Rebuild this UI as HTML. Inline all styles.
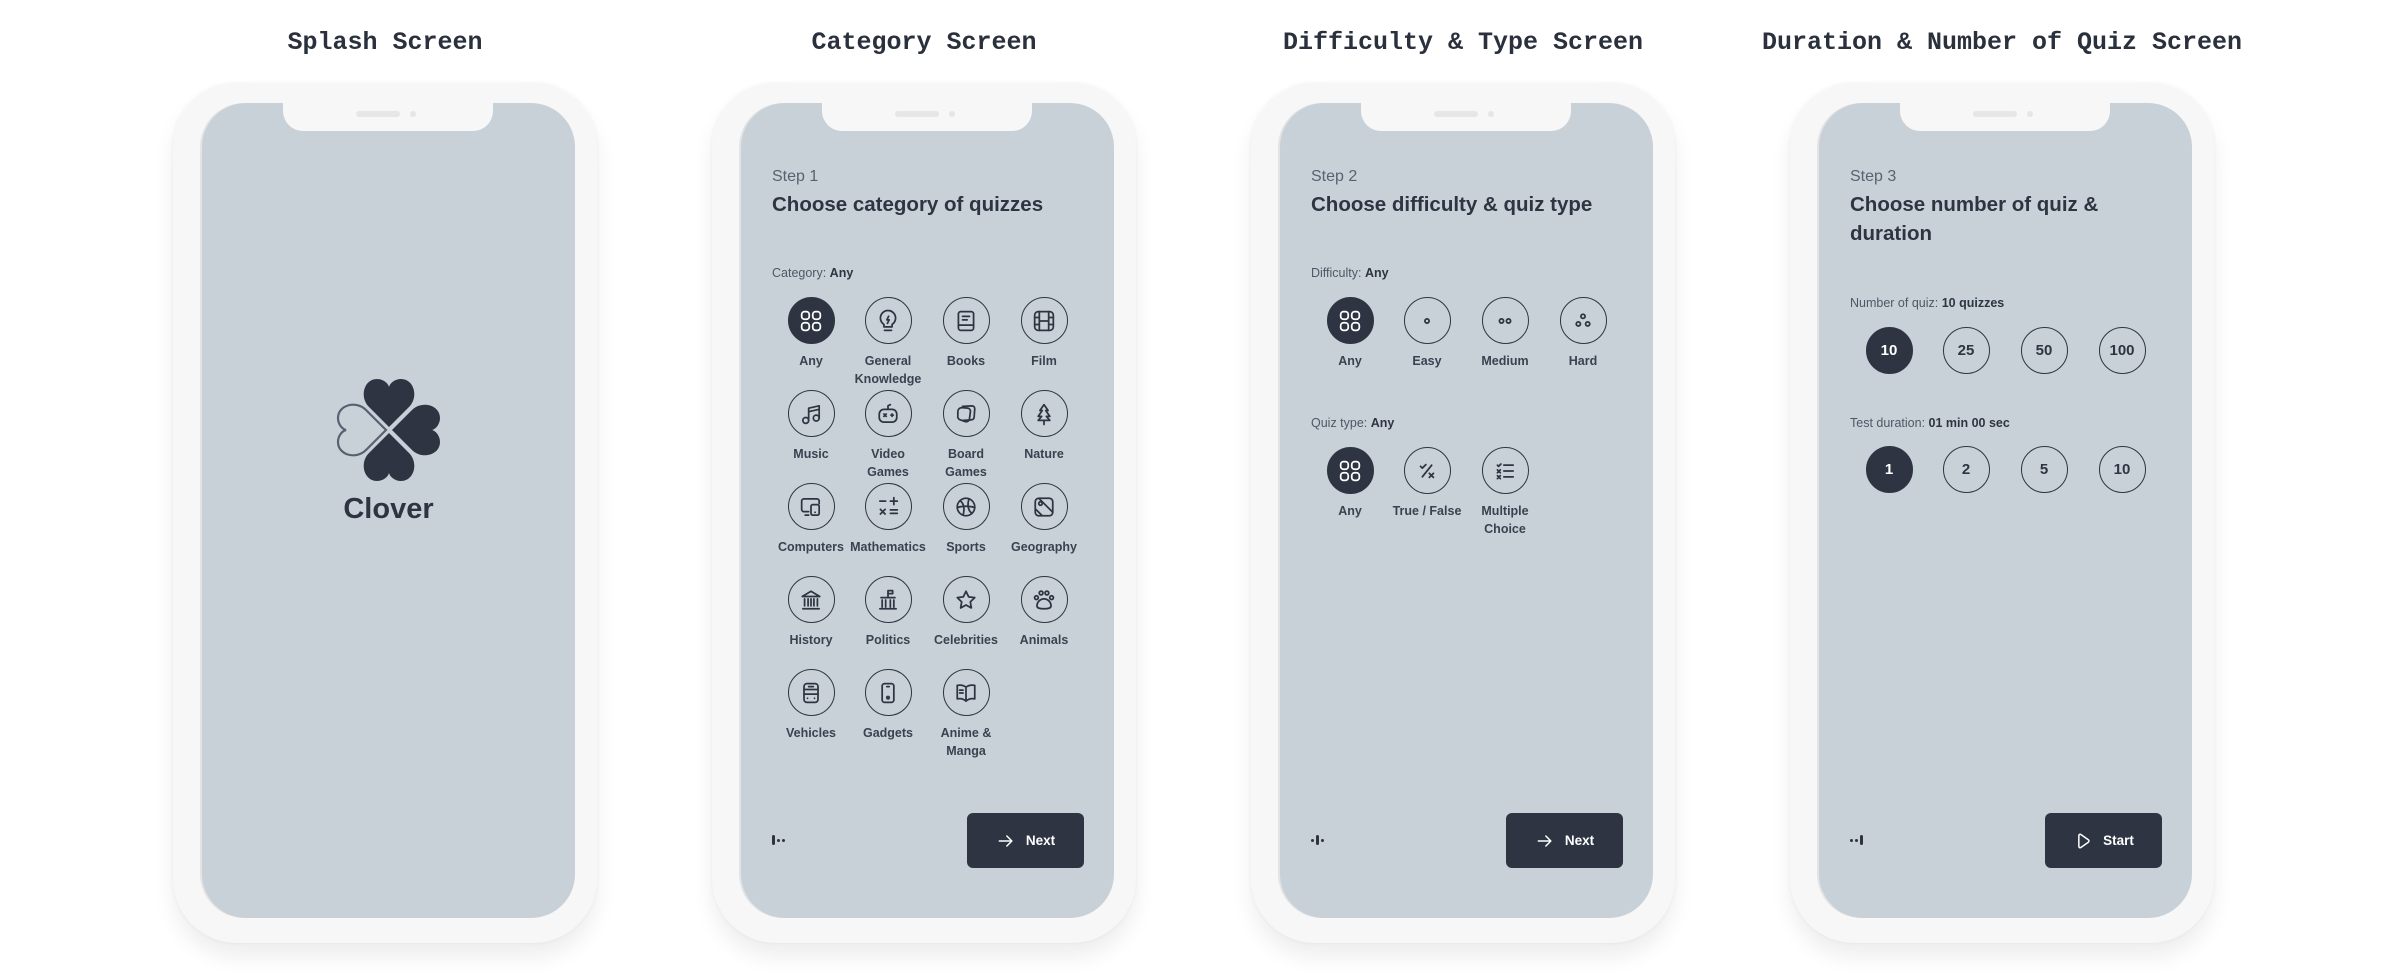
<!DOCTYPE html>
<html><head><meta charset="utf-8"><style>
*{margin:0;padding:0;box-sizing:border-box}
body{width:2388px;height:979px;background:#fff;position:relative;overflow:hidden;font-family:"Liberation Sans",sans-serif;color:#2e3442}
.t{position:absolute;top:28px;width:540px;text-align:center;font-family:"Liberation Mono",monospace;font-weight:bold;font-size:25px;color:#2a303c}
.ph{position:absolute;top:83px;width:424px;height:860px;background:#f7f7f7;border-radius:64px;box-shadow:0 14px 22px rgba(0,0,0,.07),0 0 4px rgba(0,0,0,.05)}
.sc{position:absolute;left:29px;top:20px;width:373px;height:815px;background:#c9d1d8;border-radius:44px;overflow:hidden;box-shadow:-2px 0 0 #e4e4e4}
.notch{position:absolute;left:81px;top:-2px;width:210px;height:30px;background:#f7f7f7;border-radius:0 0 20px 20px}
.spk{position:absolute;left:73px;top:10px;width:44px;height:6px;border-radius:3px;background:#e6e6e6}
.cam{position:absolute;left:127px;top:10px;width:6px;height:6px;border-radius:3px;background:#e6e6e6}
.step{position:absolute;left:31px;top:65px;font-size:16px;color:#596171}
.h{position:absolute;left:31px;top:87px;font-size:20.5px;font-weight:bold;color:#2e3442;line-height:29px;width:320px}
.lbl{position:absolute;left:31px;font-size:12.5px;color:#4f5766}
.lbl b{color:#2e3442}
.it{position:absolute;width:80px;margin-left:-40px;text-align:center}
.c{width:47px;height:47px;border:1.6px solid #2e3442;border-radius:50%;margin:0 auto;display:flex;align-items:center;justify-content:center;font-size:15px;font-weight:bold;color:#2e3442}
.c.on{background:#2e3442;color:#fff}
.c svg{width:28px;height:28px;fill:none;stroke:#2e3442;stroke-width:1.5;stroke-linecap:round;stroke-linejoin:round}
.c.on svg{stroke:#fff}
.it span{display:block;margin-top:8px;font-size:12.5px;font-weight:bold;line-height:18px;color:#3a4150;white-space:normal}
.it.w{width:96px;margin-left:-48px}
.btn{position:absolute;left:226px;top:710px;width:117px;height:55px;background:#2e3442;border-radius:6px;color:#fff;font-size:13.5px;font-weight:bold;display:flex;align-items:center;justify-content:center;gap:10px}
.btn svg{width:20px;height:20px;fill:none;stroke:#fff;stroke-width:1.8;stroke-linecap:round;stroke-linejoin:round}
.pg{position:absolute;left:31px;top:732px;display:flex;align-items:center;gap:2px}
.pg i{display:block;width:3px;height:3px;border-radius:2px;background:#2e3442}
.pg i.b{height:10px;width:3px}
</style></head><body>
<svg width="0" height="0" style="position:absolute"><defs>
<symbol id="any" viewBox="0 0 24 24"><rect x="4" y="4" width="6.5" height="6.5" rx="2.5"/><rect x="13.5" y="4" width="6.5" height="6.5" rx="2.5"/><rect x="4" y="13.5" width="6.5" height="6.5" rx="2.5"/><rect x="13.5" y="13.5" width="6.5" height="6.5" rx="2.5"/></symbol>
</defs></svg>

<div class="t" style="left:115px">Splash Screen</div>
<div class="t" style="left:654px">Category Screen</div>
<div class="t" style="left:1193px">Difficulty &amp; Type Screen</div>
<div class="t" style="left:1732px">Duration &amp; Number of Quiz Screen</div>

<!-- Phone 1 -->
<div class="ph" style="left:173px"><div class="sc"><div class="notch"><div class="spk"></div><div class="cam"></div></div>
<svg style="position:absolute;left:127px;top:267px" width="120" height="120" viewBox="-60 -60 120 120">
<path transform="translate(0,-3)" d="M0,0 L-20,-20 C-30,-30 -25,-48 -12,-48 C-6,-48 -1,-44 0,-40 C1,-44 6,-48 12,-48 C25,-48 30,-30 20,-20 Z" fill="#2e3442"/>
<path transform="rotate(90) translate(0,-3)" d="M0,0 L-20,-20 C-30,-30 -25,-48 -12,-48 C-6,-48 -1,-44 0,-40 C1,-44 6,-48 12,-48 C25,-48 30,-30 20,-20 Z" fill="#2e3442"/>
<path transform="rotate(180) translate(0,-3)" d="M0,0 L-20,-20 C-30,-30 -25,-48 -12,-48 C-6,-48 -1,-44 0,-40 C1,-44 6,-48 12,-48 C25,-48 30,-30 20,-20 Z" fill="#2e3442"/>
<path transform="rotate(270) translate(0,-3)" d="M0,0 L-20,-20 C-30,-30 -25,-48 -12,-48 C-6,-48 -1,-44 0,-40 C1,-44 6,-48 12,-48 C25,-48 30,-30 20,-20 Z" fill="none" stroke="#596171" stroke-width="2.2"/>
</svg>
<div style="position:absolute;left:0;width:373px;top:390px;text-align:center;font-size:29px;font-weight:bold;color:#2e3442">Clover</div>
</div></div>

<!-- Phone 2 -->
<div class="ph" style="left:712px"><div class="sc"><div class="notch"><div class="spk"></div><div class="cam"></div></div>
<div class="step">Step 1</div><div class="h">Choose category of quizzes</div>
<div class="lbl" style="top:163px">Category: <b>Any</b></div>
<div class="it" style="left:70px;top:194px"><div class="c on"><svg><use href="#any"/></svg></div><span>Any</span></div>
<div class="it" style="left:147px;top:194px"><div class="c"><svg viewBox="0 0 24 24"><path d="M8.5 15c-2-1.5-3-3.3-3-5.5a6.5 6.5 0 0113 0c0 2.2-1 4-3 5.5v2h-7z"/><path d="M9 20h6M12.5 8l-1.5 3h2l-1.5 3"/></svg></div><span>General Knowledge</span></div>
<div class="it" style="left:225px;top:194px"><div class="c"><svg viewBox="0 0 24 24"><rect x="5.5" y="4" width="13" height="16" rx="2"/><path d="M5.5 15.5h13M9 8h6M9 11h4"/></svg></div><span>Books</span></div>
<div class="it" style="left:303px;top:194px"><div class="c"><svg viewBox="0 0 24 24"><rect x="4" y="4" width="16" height="16" rx="3"/><path d="M8 4v16M16 4v16M4 9h4M4 15h4M16 9h4M16 15h4M8 12h8"/></svg></div><span>Film</span></div>

<div class="it" style="left:70px;top:287px"><div class="c"><svg viewBox="0 0 24 24"><circle cx="7.5" cy="17.5" r="2.5"/><circle cx="16.5" cy="15.5" r="2.5"/><path d="M10 17.5V7l9-2v10.5M10 10l9-2"/></svg></div><span>Music</span></div>
<div class="it" style="left:147px;top:287px"><div class="c"><svg viewBox="0 0 24 24"><rect x="4.5" y="8" width="15" height="11" rx="4"/><path d="M12 8V5l2-1M8.5 12l2 2M10.5 12l-2 2M15.5 12v2M14.5 13h2"/></svg></div><span>Video<br>Games</span></div>
<div class="it" style="left:225px;top:287px"><div class="c"><svg viewBox="0 0 24 24"><path d="M9 5.5l8-.5c1.5 0 2.5 1 2.5 2.5l-.5 7c0 1.5-1 2.5-2.5 2.5l-7 .5"/><path d="M5 10c0-2 1.5-3.5 3.5-3.5l5 .5c1.5.2 2.5 1.5 2.3 3l-.8 6c-.2 2-2 3-3.8 2.5L7 17c-1.5-.5-2.5-2-2-3.5z"/></svg></div><span>Board<br>Games</span></div>
<div class="it" style="left:303px;top:287px"><div class="c"><svg viewBox="0 0 24 24"><path d="M12 4l-3.5 5h2L7 14h3l-3 3.5h10l-3-3.5h3l-3.5-5h2zM12 17.5V21"/></svg></div><span>Nature</span></div>

<div class="it w" style="left:70px;top:380px"><div class="c"><svg viewBox="0 0 24 24"><path d="M10 16H6a2 2 0 01-2-2V7a2 2 0 012-2h11a2 2 0 012 2v2M7 19h3"/><rect x="12" y="10" width="7" height="9" rx="1.5"/><path d="M15.5 16.5v.1"/></svg></div><span>Computers</span></div>
<div class="it w" style="left:147px;top:380px"><div class="c"><svg viewBox="0 0 24 24"><path d="M5 7h5M14 7h6M17 4v6M5.5 14l4 4M9.5 14l-4 4M14 14.5h6M14 17.5h6"/></svg></div><span>Mathematics</span></div>
<div class="it" style="left:225px;top:380px"><div class="c"><svg viewBox="0 0 24 24"><circle cx="12" cy="12" r="7.5"/><path d="M7 6.5c3 2.5 4 7 2.5 12.5M17 17.5c-3-2.5-4-7-2.5-12.5M4.5 12.5c4-1.5 11-1.5 15 0"/></svg></div><span>Sports</span></div>
<div class="it w" style="left:303px;top:380px"><div class="c"><svg viewBox="0 0 24 24"><rect x="4.5" y="4.5" width="15" height="15" rx="3"/><circle cx="9" cy="9" r="1.5"/><path d="M5 14l5 5M8 5l11.5 11.5"/></svg></div><span>Geography</span></div>

<div class="it" style="left:70px;top:473px"><div class="c"><svg viewBox="0 0 24 24"><path d="M4.5 9L12 4.5 19.5 9zM5 19.5h14M6.5 11v6M9.5 11v6M12 11v6M14.5 11v6M17.5 11v6"/></svg></div><span>History</span></div>
<div class="it" style="left:147px;top:473px"><div class="c"><svg viewBox="0 0 24 24"><path d="M12 10V4h4v2.5h-4M6 10h12M5 19.5h14M7 12v6M10 12v6M14 12v6M17 12v6"/></svg></div><span>Politics</span></div>
<div class="it w" style="left:225px;top:473px"><div class="c"><svg viewBox="0 0 24 24"><path d="M12 4.5l2.3 4.8 5.2.7-3.8 3.6.9 5.2-4.6-2.5-4.6 2.5.9-5.2L4.5 10l5.2-.7z"/></svg></div><span>Celebrities</span></div>
<div class="it" style="left:303px;top:473px"><div class="c"><svg viewBox="0 0 24 24"><circle cx="5.5" cy="10" r="1.6"/><circle cx="9.5" cy="6" r="1.6"/><circle cx="14.5" cy="6" r="1.6"/><circle cx="18.5" cy="10" r="1.6"/><path d="M12 11c-3.5 0-6 3-6 6 0 2 2 2.5 6 2.5s6-.5 6-2.5c0-3-2.5-6-6-6z"/></svg></div><span>Animals</span></div>

<div class="it" style="left:70px;top:566px"><div class="c"><svg viewBox="0 0 24 24"><rect x="6" y="4" width="12" height="16" rx="2.5"/><path d="M6 9h12M6 13h12M9 16.5v.1M15 16.5v.1M10 6.5h4"/></svg></div><span>Vehicles</span></div>
<div class="it" style="left:147px;top:566px"><div class="c"><svg viewBox="0 0 24 24"><rect x="7" y="4" width="10" height="16" rx="2"/><path d="M11 6.5h2"/><circle cx="12" cy="16" r="1"/></svg></div><span>Gadgets</span></div>
<div class="it" style="left:225px;top:566px"><div class="c"><svg viewBox="0 0 24 24"><path d="M12 7v12M12 7c-2-1.5-5-2-7.5-1.5V17c2.5-.5 5.5 0 7.5 2 2-2 5-2.5 7.5-2V5.5C17 5 14 5.5 12 7zM6.5 9.5h3M6.5 12h3"/></svg></div><span>Anime &amp;<br>Manga</span></div>

<div class="pg"><i class="b"></i><i></i><i></i></div>
<div class="btn"><svg viewBox="0 0 24 24"><path d="M4 12h15M13 6l6 6-6 6"/></svg>Next</div>
</div></div>

<!-- Phone 3 -->
<div class="ph" style="left:1251px"><div class="sc"><div class="notch"><div class="spk"></div><div class="cam"></div></div>
<div class="step">Step 2</div><div class="h">Choose difficulty &amp; quiz type</div>
<div class="lbl" style="top:163px">Difficulty: <b>Any</b></div>
<div class="it" style="left:70px;top:194px"><div class="c on"><svg><use href="#any"/></svg></div><span>Any</span></div>
<div class="it" style="left:147px;top:194px"><div class="c"><svg viewBox="0 0 24 24"><circle cx="12" cy="12" r="1.8"/></svg></div><span>Easy</span></div>
<div class="it" style="left:225px;top:194px"><div class="c"><svg viewBox="0 0 24 24"><circle cx="9" cy="12" r="1.8"/><circle cx="15" cy="12" r="1.8"/></svg></div><span>Medium</span></div>
<div class="it" style="left:303px;top:194px"><div class="c"><svg viewBox="0 0 24 24"><circle cx="12" cy="8" r="1.8"/><circle cx="8" cy="14.5" r="1.8"/><circle cx="16" cy="14.5" r="1.8"/></svg></div><span>Hard</span></div>
<div class="lbl" style="top:313px">Quiz type: <b>Any</b></div>
<div class="it" style="left:70px;top:344px"><div class="c on"><svg><use href="#any"/></svg></div><span>Any</span></div>
<div class="it w" style="left:147px;top:344px"><div class="c"><svg viewBox="0 0 24 24"><path d="M6.5 8l1.5 1.5 3-3M16 7l-8 10M14 14l3.5 3.5M17.5 14L14 17.5"/></svg></div><span>True / False</span></div>
<div class="it" style="left:225px;top:344px"><div class="c"><svg viewBox="0 0 24 24"><path d="M5.5 7l1 1 2-2M5.5 11l2.5 2.5M8 11l-2.5 2.5M5.5 16l2.5 2.5M8 16l-2.5 2.5M11 7h8M11 12h8M11 17h8"/></svg></div><span>Multiple<br>Choice</span></div>
<div class="pg"><i></i><i class="b"></i><i></i></div>
<div class="btn"><svg viewBox="0 0 24 24"><path d="M4 12h15M13 6l6 6-6 6"/></svg>Next</div>
</div></div>

<!-- Phone 4 -->
<div class="ph" style="left:1790px"><div class="sc"><div class="notch"><div class="spk"></div><div class="cam"></div></div>
<div class="step">Step 3</div><div class="h">Choose number of quiz &amp; duration</div>
<div class="lbl" style="top:193px">Number of quiz: <b>10 quizzes</b></div>
<div class="it" style="left:70px;top:224px"><div class="c on">10</div></div>
<div class="it" style="left:147px;top:224px"><div class="c">25</div></div>
<div class="it" style="left:225px;top:224px"><div class="c">50</div></div>
<div class="it" style="left:303px;top:224px"><div class="c">100</div></div>
<div class="lbl" style="top:313px">Test duration: <b>01 min 00 sec</b></div>
<div class="it" style="left:70px;top:343px"><div class="c on">1</div></div>
<div class="it" style="left:147px;top:343px"><div class="c">2</div></div>
<div class="it" style="left:225px;top:343px"><div class="c">5</div></div>
<div class="it" style="left:303px;top:343px"><div class="c">10</div></div>
<div class="pg"><i></i><i></i><i class="b"></i></div>
<div class="btn"><svg viewBox="0 0 24 24"><path d="M7 5.5c0-1.2 1.3-2 2.4-1.3l9 6.3c1 .7 1 2.3 0 3l-9 6.3c-1.1.7-2.4-.1-2.4-1.3z"/></svg>Start</div>
</div></div>
</body></html>
